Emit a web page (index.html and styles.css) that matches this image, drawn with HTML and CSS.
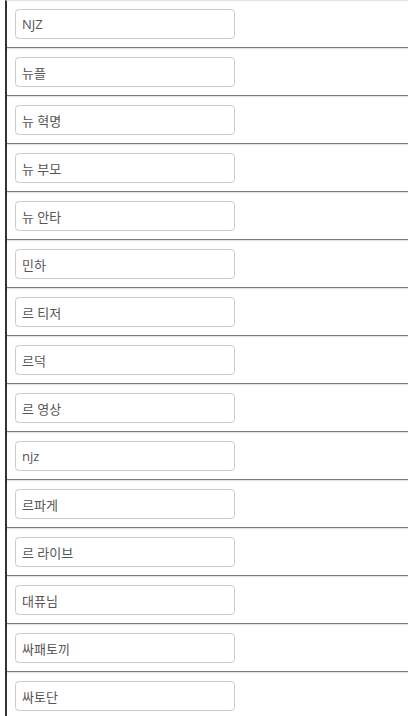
FILE: index.html
```html
<!DOCTYPE html>
<html lang="ko">
<head>
<meta charset="utf-8">
<link rel="stylesheet" href="styles.css">
</head>
<body>
<div class="list">
  <div class="row"><input class="field" type="text" value="NJZ"></div>
  <div class="row"><input class="field" type="text" value="뉴플"></div>
  <div class="row"><input class="field" type="text" value="뉴 혁명"></div>
  <div class="row"><input class="field" type="text" value="뉴 부모"></div>
  <div class="row"><input class="field" type="text" value="뉴 안타"></div>
  <div class="row"><input class="field" type="text" value="민하"></div>
  <div class="row"><input class="field" type="text" value="르 티저"></div>
  <div class="row"><input class="field" type="text" value="르덕"></div>
  <div class="row"><input class="field" type="text" value="르 영상"></div>
  <div class="row"><input class="field" type="text" value="njz"></div>
  <div class="row"><input class="field" type="text" value="르파게"></div>
  <div class="row"><input class="field" type="text" value="르 라이브"></div>
  <div class="row"><input class="field" type="text" value="대퓨님"></div>
  <div class="row"><input class="field" type="text" value="싸패토끼"></div>
  <div class="row"><input class="field" type="text" value="싸토단"></div>
</div>
</body>
</html>
```
FILE: styles.css
```css
html, body {
  margin: 0;
  padding: 0;
  background: #fff;
  overflow: hidden;
}
.list {
  margin-left: 5px;
  border-left: 2px solid #333;
  border-top: 1px solid #e2e2e2;
}
.row {
  padding: 8px 0 8px 8px;
  border-bottom: 1px solid #7a7a7a;
  box-shadow: 0 1px 0 #e4e4e4;
  margin-bottom: 1px;
}
.field {
  display: block;
  box-sizing: border-box;
  width: 220px;
  height: 30px;
  margin: 0;
  padding: 0 6px;
  border: 1px solid #ccc;
  border-radius: 4px;
  background: #fff;
  color: #555;
  font-family: "Open Sans", "Noto Sans CJK KR", sans-serif;
  font-size: 13px;
  outline: none;
}
```
